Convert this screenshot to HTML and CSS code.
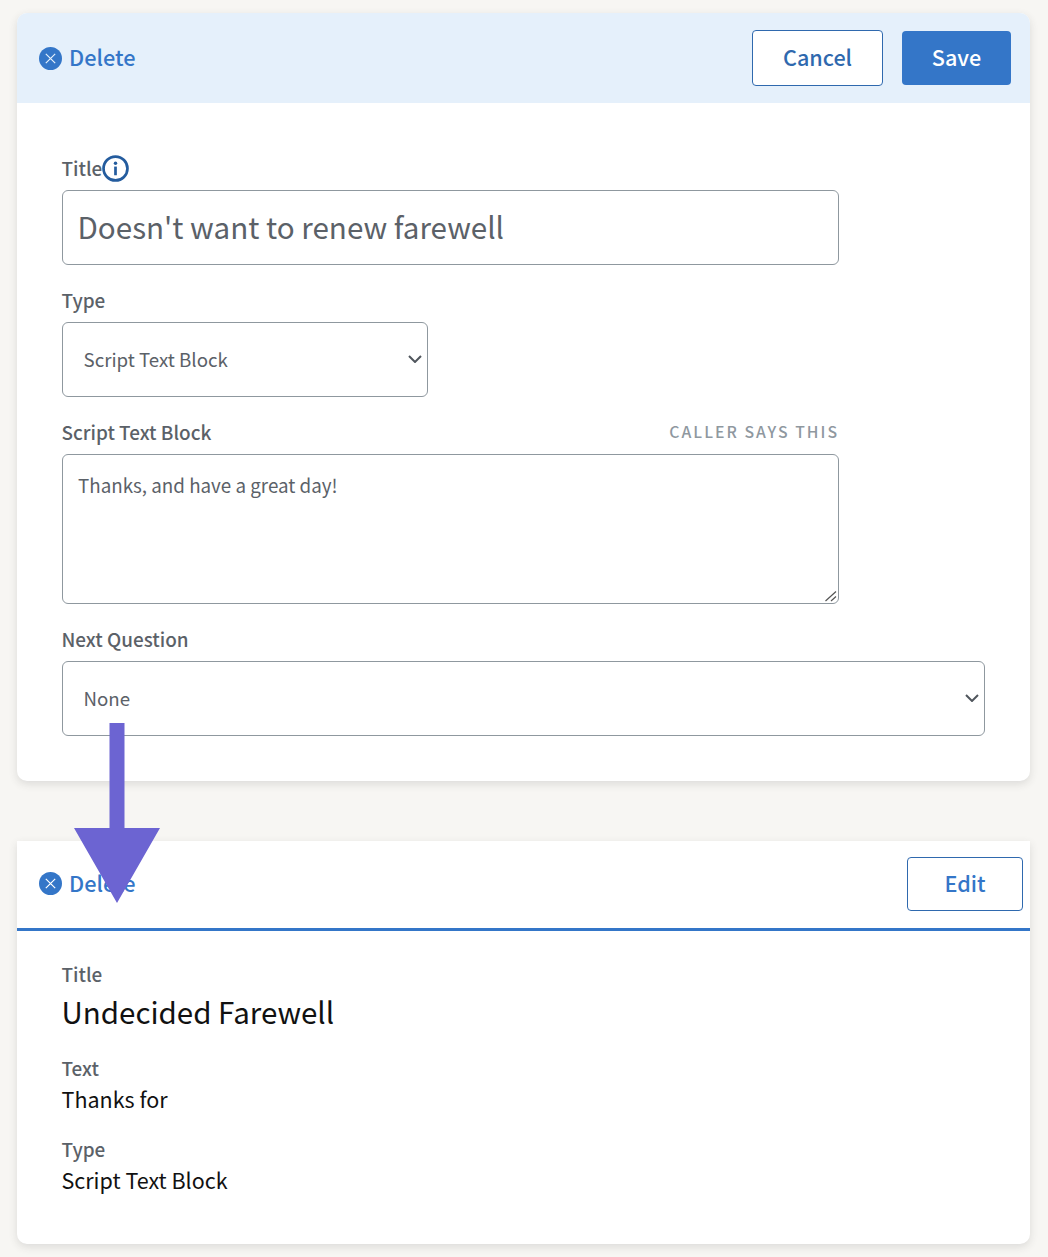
FILE: index.html
```html
<!DOCTYPE html>
<html lang="en">
<head>
<meta charset="utf-8">
<title>Script editor</title>
<link rel="stylesheet" href="styles.css">
</head>
<body>
<main class="page">
  <section class="card card-edit">
    <header class="bar bar-edit">
      <a class="delete" href="#">
        <svg class="delete-icon" viewBox="0 0 23 23" aria-hidden="true"><circle cx="11.5" cy="11.5" r="11.5" fill="#3476c8"/><path d="M6.8 6.8l9.4 9.4M16.2 6.8l-9.4 9.4" stroke="#e5f0fb" stroke-width="1.2" fill="none"/></svg>
        <span class="delete-text">Delete</span>
      </a>
      <div class="actions">
        <button class="btn btn-outline btn-cancel" type="button">Cancel</button>
        <button class="btn btn-primary" type="button">Save</button>
      </div>
    </header>
    <form class="form">
      <div class="label-row label-title">
        <label class="label">Title</label>
        <svg class="info" viewBox="0 0 28 28" aria-hidden="true"><circle cx="14" cy="14" r="12.4" fill="none" stroke="#245c9e" stroke-width="2.8"/><circle cx="14" cy="8.6" r="1.8" fill="#245c9e"/><rect x="12.6" y="12" width="2.8" height="9" fill="#245c9e"/></svg>
      </div>
      <input class="field field-title" type="text" value="Doesn't want to renew farewell">
      <div class="label-row label-type"><label class="label">Type</label></div>
      <div class="select-wrap select-type">
        <select class="field select"><option>Script Text Block</option></select>
        <svg class="chevron" viewBox="0 0 14 8" aria-hidden="true"><path d="M1 1l6 6 6-6" fill="none" stroke="#50565d" stroke-width="2"/></svg>
      </div>
      <div class="label-row label-script">
        <label class="label">Script Text Block</label>
        <span class="hint">CALLER SAYS THIS</span>
      </div>
      <div class="textarea-wrap">
        <textarea class="field textarea">Thanks, and have a great day!</textarea>
        <svg class="grip" viewBox="0 0 12 11" aria-hidden="true"><path d="M.5 10L11 .5M6 10l5-4.5" fill="none" stroke="#555" stroke-width="1.2"/></svg>
      </div>
      <div class="label-row label-next"><label class="label">Next Question</label></div>
      <div class="select-wrap select-next">
        <select class="field select"><option>None</option></select>
        <svg class="chevron" viewBox="0 0 14 8" aria-hidden="true"><path d="M1 1l6 6 6-6" fill="none" stroke="#50565d" stroke-width="2"/></svg>
      </div>
    </form>
  </section>

  <section class="card card-view">
    <header class="bar bar-view">
      <a class="delete" href="#">
        <svg class="delete-icon" viewBox="0 0 23 23" aria-hidden="true"><circle cx="11.5" cy="11.5" r="11.5" fill="#3476c8"/><path d="M6.8 6.8l9.4 9.4M16.2 6.8l-9.4 9.4" stroke="#fff" stroke-width="1.2" fill="none"/></svg>
        <span class="delete-text">Delete</span>
      </a>
      <button class="btn btn-outline btn-edit" type="button">Edit</button>
    </header>
    <div class="details">
      <div class="detail detail-title">
        <div class="label">Title</div>
        <div class="value-large">Undecided Farewell</div>
      </div>
      <div class="detail detail-text">
        <div class="label">Text</div>
        <div class="value">Thanks for</div>
      </div>
      <div class="detail">
        <div class="label">Type</div>
        <div class="value">Script Text Block</div>
      </div>
    </div>
  </section>
</main>
<svg class="arrow" viewBox="0 0 86 180" aria-hidden="true"><path d="M35.5 0h15v105H86L43 180 0 105h35.5z" fill="#6c64d2"/></svg>
</body>
</html>
```

FILE: styles.css
```css
* { box-sizing: border-box; }
html, body { margin: 0; padding: 0; }
body {
  background: #f7f6f3;
  font-family: "Noto Sans CJK SC", "Noto Sans", sans-serif;
  color: #5b6168;
  position: relative;
  height: 1257px;
  overflow: hidden;
}
.page {
  display: flex;
  flex-direction: column;
  gap: 60px;
  padding: 13px 18px 0 17px;
}
.card {
  background: #fff;
  border-radius: 10px;
  box-shadow: 0 3px 8px rgba(60, 60, 60, .14);
  overflow: hidden;
}
.card-edit { height: 768px; }
.card-view { height: 403px; border-radius: 0 0 10px 10px; }
.bar {
  display: flex;
  align-items: center;
  justify-content: space-between;
}
.bar-edit {
  height: 90px;
  background: #e5f0fb;
  padding: 0 19px 0 22px;
}
.bar-view {
  height: 90px;
  border-bottom: 3px solid #3476c8;
  padding: 0 7px 0 22px;
}
.delete {
  display: flex;
  align-items: center;
  gap: 7px;
  color: #3476c8;
  text-decoration: none;
  font-size: 21.7px;
  line-height: 30px;
  font-weight: 500;
}
.delete-text { padding-bottom: 2px; }
.bar-view .delete { position: relative; top: -1px; }
.delete-icon { width: 23px; height: 23px; flex: none; }
.actions { display: flex; align-items: center; gap: 19px; }
.btn {
  font-family: inherit;
  font-size: 21.6px;
  line-height: 30px;
  font-weight: 500;
  border-radius: 4px;
  padding: 0 0 2px;
  cursor: pointer;
}
.btn-outline { background: #fff; border: 1px solid #2f69ae; color: #2f69ae; }
.btn-primary { background: #3476c8; border: 0; color: #fff; width: 109px; height: 54px; }
.btn-cancel { width: 131px; height: 56px; }
.btn-edit { width: 116px; height: 54px; color: #3476c8; position: relative; top: -1px; }
.form { padding: 0 45px; display: flex; flex-direction: column; align-items: flex-start; }
.label-row {
  display: flex;
  align-items: flex-start;
  justify-content: space-between;
  height: 26px;
}
.label {
  font-size: 18.9px;
  line-height: 24px;
  font-weight: 500;
  color: #5b6168;
  margin-left: -0.5px;
}
.label-title { margin-top: 52px; justify-content: flex-start; align-items: center; height: 26px; }
.info { width: 27px; height: 27px; flex: none; }
.label-type { margin-top: 23px; }
.label-script { margin-top: 23px; width: 777px; }
.label-next { margin-top: 23px; }
.hint {
  font-size: 15.8px;
  line-height: 24px;
  font-weight: 500;
  letter-spacing: 2px;
  color: #8f989f;
}
.field {
  display: block;
  font-family: inherit;
  color: #5b6168;
  background-color: #fff;
  border: 1px solid #8f989f;
  border-radius: 6px;
  outline: none;
}
.field-title {
  width: 777px;
  height: 75px;
  margin-top: 9px;
  padding: 0 15px 2px 14.5px;
  font-size: 29.6px;
}
.select-wrap { position: relative; margin-top: 8px; }
.select-type { width: 366px; }
.select-next { width: 923px; }
.select {
  width: 100%;
  height: 75px;
  padding: 0 20.5px 2px;
  font-size: 18.7px;
  appearance: none;
}
.chevron {
  position: absolute;
  right: 6px;
  top: 33px;
  width: 14px;
  height: 8px;
}
.textarea-wrap { position: relative; margin-top: 8px; width: 777px; height: 150px; }
.textarea {
  width: 100%;
  height: 100%;
  padding: 15px 15px;
  font-size: 18.8px;
  line-height: 30px;
  resize: none;
}
.grip {
  position: absolute;
  right: 2px;
  bottom: 2px;
  width: 12px;
  height: 11px;
}
.details { padding: 30px 45px 0; }
.detail { margin-bottom: 18px; }
.detail-title { margin-bottom: 22px; }
.detail-text { margin-bottom: 21px; }
.details .label { line-height: 26px; }
.value-large { color: #111; font-size: 29.5px; line-height: 44px; margin-top: 2px; margin-left: -0.5px; }
.value { color: #111; font-size: 21.5px; line-height: 32px; margin-top: 2px; margin-left: -0.5px; }
.arrow {
  position: absolute;
  left: 74px;
  top: 723px;
  width: 86px;
  height: 180px;
}
```
